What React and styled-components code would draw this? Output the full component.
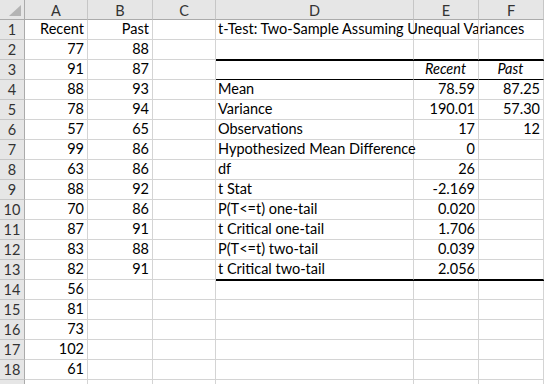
import React from "react";
import styled, { createGlobalStyle } from "styled-components";

const GlobalStyle = createGlobalStyle`
  html, body {
    margin: 0;
    padding: 0;
    background: #ffffff;
    overflow: hidden;
  }
`;

const COLS = ["A", "B", "C", "D", "E", "F"];
const WIDTHS = [25, 63, 65, 63, 198, 65, 65];

const Sheet = styled.div`
  display: grid;
  grid-template-columns: ${WIDTHS.map((w) => `${w}px`).join(" ")};
  grid-auto-rows: 20px;
  width: 544px;
  height: 384px;
  overflow: hidden;
  font-family: Lato, "Open Sans", sans-serif;
  font-size: 14.5px;
  color: #000;
`;

const Corner = styled.div`
  position: relative;
  background: #e6e6e6;
  border-right: 1px solid #ababab;
  border-bottom: 1px solid #ababab;
  box-sizing: border-box;
`;

const Triangle = styled.div`
  position: absolute;
  right: 3px;
  bottom: 3px;
  width: 0;
  height: 0;
  border-left: 12px solid transparent;
  border-bottom: 11px solid #b4b4b4;
`;

const ColHead = styled.div`
  display: flex;
  align-items: center;
  justify-content: center;
  background: #e6e6e6;
  border-right: 1px solid #c6c6c6;
  border-bottom: 1px solid #ababab;
  box-sizing: border-box;
  color: #333;
  padding-top: 1px;
`;

const RowHead = styled.div`
  display: flex;
  align-items: flex-end;
  justify-content: center;
  background: #e6e6e6;
  border-right: 1px solid #ababab;
  border-bottom: 1px solid #c6c6c6;
  box-sizing: border-box;
  color: #333;
  padding-bottom: 1px;
`;

const Cell = styled.div`
  position: relative;
  display: flex;
  align-items: flex-end;
  justify-content: ${({ $align }) =>
    $align === "right" ? "flex-end" : $align === "center" ? "center" : "flex-start"};
  padding: 0 3px 1px 2px;
  box-sizing: border-box;
  white-space: nowrap;
  border-right: 1px solid #d4d4d4;
  border-bottom: 1px solid
    ${({ $edge }) => ($edge ? "#000" : "#d4d4d4")};
  ${({ $edge }) => ($edge === "thick" ? "box-shadow: 0 1px 0 #000; z-index: 1;" : "")}
  font-style: ${({ $italic }) => ($italic ? "italic" : "normal")};
  line-height: 18px;
`;

const recent = [77, 91, 88, 78, 57, 99, 63, 88, 70, 87, 83, 82, 56, 81, 73, 102, 61];
const past = [88, 87, 93, 94, 65, 86, 86, 92, 86, 91, 88, 91];

const stats = [
  ["Mean", "78.59", "87.25"],
  ["Variance", "190.01", "57.30"],
  ["Observations", "17", "12"],
  ["Hypothesized Mean Difference", "0", ""],
  ["df", "26", ""],
  ["t Stat", "-2.169", ""],
  ["P(T<=t) one-tail", "0.020", ""],
  ["t Critical one-tail", "1.706", ""],
  ["P(T<=t) two-tail", "0.039", ""],
  ["t Critical two-tail", "2.056", ""],
];

function buildRow(r) {
  const a = r === 1 ? "Recent" : recent[r - 2] ?? "";
  const b = r === 1 ? "Past" : past[r - 2] ?? "";
  let d = { text: "" };
  let e = { text: "", align: "right" };
  let f = { text: "", align: "right" };
  if (r === 1) d = { text: "t-Test: Two-Sample Assuming Unequal Variances" };
  if (r === 2) {
    d.edge = e.edge = f.edge = "thick";
  }
  if (r === 3) {
    e = { text: "Recent", align: "center", italic: true };
    f = { text: "Past", align: "center", italic: true };
    d.edge = e.edge = f.edge = "thin";
  }
  if (r >= 4 && r <= 13) {
    const s = stats[r - 4];
    d = { text: s[0] };
    e = { text: s[1], align: "right" };
    f = { text: s[2], align: "right" };
  }
  if (r === 13) {
    d.edge = e.edge = f.edge = "thick";
  }
  return [
    { text: a, align: "right" },
    { text: b, align: "right" },
    { text: "" },
    d,
    e,
    f,
  ];
}

export default function App() {
  const rows = Array.from({ length: 19 }, (_, i) => i + 1);
  return (
    <>
      <GlobalStyle />
      <Sheet>
        <Corner>
          <Triangle />
        </Corner>
        {COLS.map((c) => (
          <ColHead key={c}>{c}</ColHead>
        ))}
        {rows.map((r) => (
          <React.Fragment key={r}>
            {/* row 19 is only a sliver at the bottom edge, its label is out of view */}
            <RowHead>{r < 19 ? r : ""}</RowHead>
            {buildRow(r).map((cell, i) => (
              <Cell
                key={i}
                $align={cell.align}
                $italic={cell.italic}
                $edge={cell.edge}
              >
                {cell.text}
              </Cell>
            ))}
          </React.Fragment>
        ))}
      </Sheet>
    </>
  );
}
